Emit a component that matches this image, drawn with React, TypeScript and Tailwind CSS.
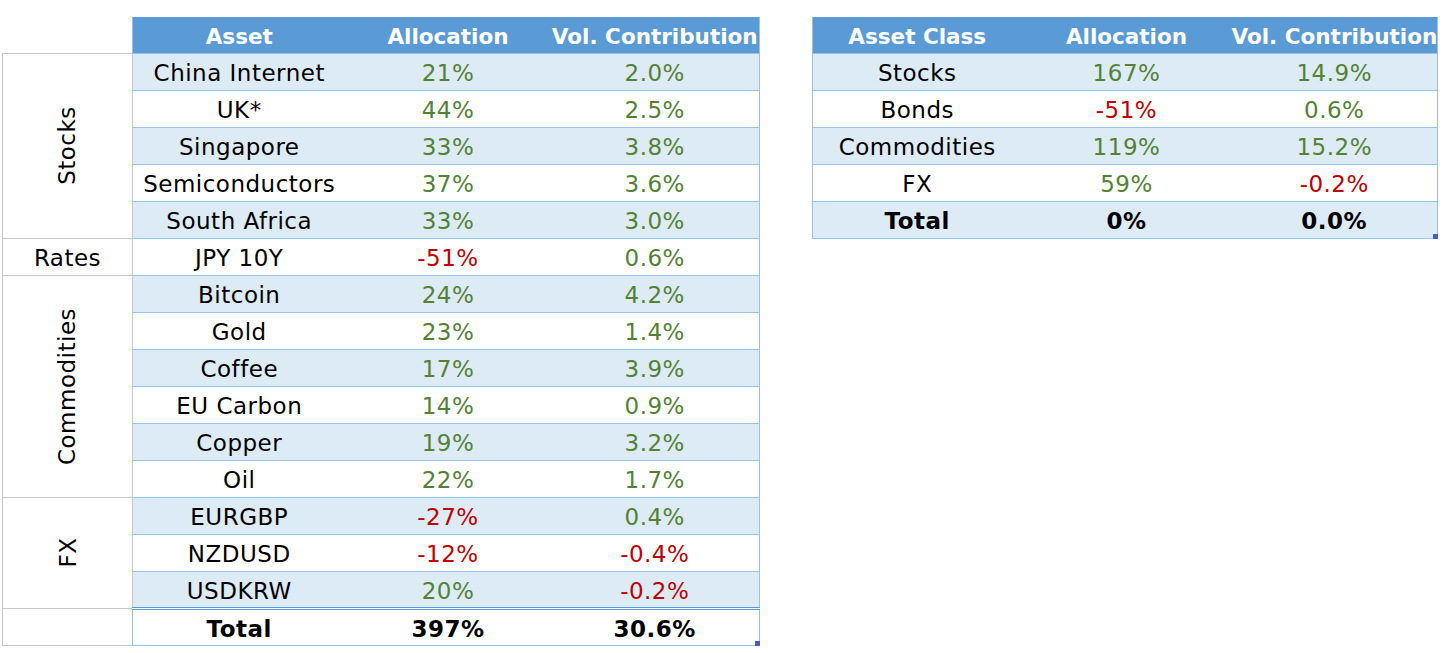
import React from 'react';

type Row = { name: string; alloc: string; vol: string };

const GROUPS: { cat: string; rotate: boolean; rows: Row[] }[] = [
  {
    cat: 'Stocks',
    rotate: true,
    rows: [
      { name: 'China Internet', alloc: '21%', vol: '2.0%' },
      { name: 'UK*', alloc: '44%', vol: '2.5%' },
      { name: 'Singapore', alloc: '33%', vol: '3.8%' },
      { name: 'Semiconductors', alloc: '37%', vol: '3.6%' },
      { name: 'South Africa', alloc: '33%', vol: '3.0%' },
    ],
  },
  { cat: 'Rates', rotate: false, rows: [{ name: 'JPY 10Y', alloc: '-51%', vol: '0.6%' }] },
  {
    cat: 'Commodities',
    rotate: true,
    rows: [
      { name: 'Bitcoin', alloc: '24%', vol: '4.2%' },
      { name: 'Gold', alloc: '23%', vol: '1.4%' },
      { name: 'Coffee', alloc: '17%', vol: '3.9%' },
      { name: 'EU Carbon', alloc: '14%', vol: '0.9%' },
      { name: 'Copper', alloc: '19%', vol: '3.2%' },
      { name: 'Oil', alloc: '22%', vol: '1.7%' },
    ],
  },
  {
    cat: 'FX',
    rotate: true,
    rows: [
      { name: 'EURGBP', alloc: '-27%', vol: '0.4%' },
      { name: 'NZDUSD', alloc: '-12%', vol: '-0.4%' },
      { name: 'USDKRW', alloc: '20%', vol: '-0.2%' },
    ],
  },
];

const CLASSES: Row[] = [
  { name: 'Stocks', alloc: '167%', vol: '14.9%' },
  { name: 'Bonds', alloc: '-51%', vol: '0.6%' },
  { name: 'Commodities', alloc: '119%', vol: '15.2%' },
  { name: 'FX', alloc: '59%', vol: '-0.2%' },
];

const num = (v: string) => (v.startsWith('-') ? 'text-[#c00000]' : 'text-[#548235]');

const Handle = () => <div className="absolute right-0 bottom-0 w-[5px] h-[5px] bg-[#4a5cc4]" />;

const head =
  'bg-[#5b9bd5] text-white font-bold text-[21.5px] tracking-normal pt-[4px] px-0 whitespace-nowrap';
const cell = 'text-center pt-[4px] px-0 whitespace-nowrap';

export default function App() {
  let idx = 0;
  return (
    <div
      className="flex gap-[52px] pt-[17px] pl-[2px] bg-white text-black text-[23px] tracking-[0.5px] leading-none"
      style={{ fontFamily: '"DejaVu Sans", sans-serif' }}
    >
      <div className="relative self-start">
        <table className="border-collapse table-fixed w-[757px]">
          <colgroup>
            <col className="w-[130px]" />
            <col className="w-[213px]" />
            <col className="w-[205px]" />
            <col className="w-[209px]" />
          </colgroup>
          <thead>
            <tr className="h-[36px]">
              <th />
              <th className={`${head} border-l border-[#9bc2e6]`}>Asset</th>
              <th className={head}>Allocation</th>
              <th className={`${head} border-r border-[#9bc2e6]`}>Vol. Contribution</th>
            </tr>
          </thead>
          <tbody>
            {GROUPS.map((g) =>
              g.rows.map((r, i) => {
                const band = idx++ % 2 === 0 ? 'bg-[#ddebf7]' : 'bg-white';
                return (
                  <tr key={r.name} className="h-[37px]">
                    {i === 0 && (
                      <td rowSpan={g.rows.length} className="border border-[#c8c8c8] p-0 overflow-hidden">
                        {g.rotate ? (
                          <div className="flex justify-center items-center">
                            <span className="shrink-0 whitespace-nowrap -rotate-90">{g.cat}</span>
                          </div>
                        ) : (
                          <div className="text-center pt-[4px]">{g.cat}</div>
                        )}
                      </td>
                    )}
                    <td className={`${band} ${cell} border-y border-l border-[#9bc2e6]`}>{r.name}</td>
                    <td className={`${band} ${cell} border-y border-[#9bc2e6] ${num(r.alloc)}`}>{r.alloc}</td>
                    <td className={`${band} ${cell} border-y border-r border-[#9bc2e6] ${num(r.vol)}`}>{r.vol}</td>
                  </tr>
                );
              })
            )}
            <tr className="h-[37px] font-bold">
              <td className="border border-[#c8c8c8]" />
              <td className={`${cell} border-l border-b border-[#9bc2e6] border-t-[3px] border-t-[#5b9bd5] border-double`}>Total</td>
              <td className={`${cell} border-b border-[#9bc2e6] border-t-[3px] border-t-[#5b9bd5] border-double`}>397%</td>
              <td className={`${cell} border-r border-b border-[#9bc2e6] border-t-[3px] border-t-[#5b9bd5] border-double`}>30.6%</td>
            </tr>
          </tbody>
        </table>
        <Handle />
      </div>

      <div className="relative self-start">
        <table className="border-collapse table-fixed w-[625px]">
          <colgroup>
            <col className="w-[209px]" />
            <col className="w-[210px]" />
            <col className="w-[206px]" />
          </colgroup>
          <thead>
            <tr className="h-[36px]">
              <th className={`${head} border-l border-[#9bc2e6]`}>Asset Class</th>
              <th className={head}>Allocation</th>
              <th className={`${head} border-r border-[#9bc2e6]`}>Vol. Contribution</th>
            </tr>
          </thead>
          <tbody>
            {CLASSES.map((r, i) => {
              const band = i % 2 === 0 ? 'bg-[#ddebf7]' : 'bg-white';
              return (
                <tr key={r.name} className="h-[37px]">
                  <td className={`${band} ${cell} border-y border-l border-[#9bc2e6]`}>{r.name}</td>
                  <td className={`${band} ${cell} border-y border-[#9bc2e6] ${num(r.alloc)}`}>{r.alloc}</td>
                  <td className={`${band} ${cell} border-y border-r border-[#9bc2e6] ${num(r.vol)}`}>{r.vol}</td>
                </tr>
              );
            })}
            <tr className="h-[37px] bg-[#ddebf7] font-bold">
              <td className={`${cell} border-y border-l border-[#9bc2e6]`}>Total</td>
              <td className={`${cell} border-y border-[#9bc2e6]`}>0%</td>
              <td className={`${cell} border-y border-r border-[#9bc2e6]`}>0.0%</td>
            </tr>
          </tbody>
        </table>
        <Handle />
      </div>
    </div>
  );
}
